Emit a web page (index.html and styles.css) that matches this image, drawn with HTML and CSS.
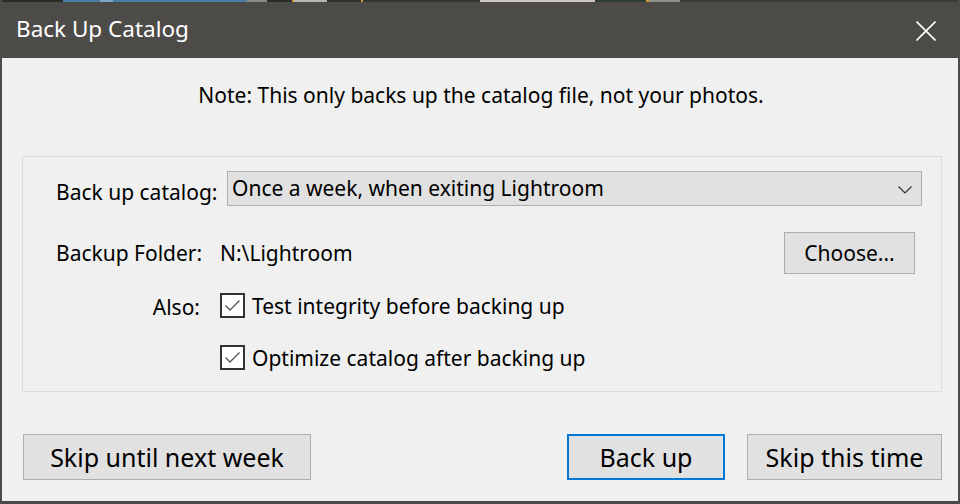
FILE: index.html
```html
<!DOCTYPE html>
<html>
<head>
<meta charset="utf-8">
<link rel="stylesheet" href="styles.css">
</head>
<body>
<div class="window">
  <div class="strip"></div>
  <div class="titlebar">
    <span class="title">Back Up Catalog</span>
    <svg class="close" width="20" height="20" viewBox="0 0 20 20"><path d="M0.5 0.5 L19.5 19.5 M19.5 0.5 L0.5 19.5" stroke="#fff" stroke-width="1.6" fill="none"/></svg>
  </div>
  <div class="content">
    <div class="note">Note: This only backs up the catalog file, not your photos.</div>
    <div class="panel">
      <div class="row row-catalog">
        <span class="label label-catalog">Back up catalog:</span>
        <div class="select">
          <span class="select-text">Once a week, when exiting Lightroom</span>
          <svg class="chev" width="14" height="8" viewBox="0 0 14 8"><path d="M0.5 0.5 L7 7 L13.5 0.5" stroke="#333" stroke-width="1.2" fill="none"/></svg>
        </div>
      </div>
      <div class="row row-folder">
        <span class="label label-folder">Backup Folder:</span>
        <span class="folder">N:\Lightroom</span>
        <button class="btn btn-choose">Choose...</button>
      </div>
      <div class="row row-check">
        <span class="label label-also">Also:</span>
        <span class="check"><svg width="21" height="21" viewBox="0 0 21 21"><path d="M3.5 10.5 L8 15 L17.5 5.5" stroke="#555" stroke-width="1.3" fill="none"/></svg></span>
        <span class="check-text">Test integrity before backing up</span>
      </div>
      <div class="row row-check row-check2">
        <span class="label label-also"></span>
        <span class="check"><svg width="21" height="21" viewBox="0 0 21 21"><path d="M3.5 10.5 L8 15 L17.5 5.5" stroke="#555" stroke-width="1.3" fill="none"/></svg></span>
        <span class="check-text">Optimize catalog after backing up</span>
      </div>
    </div>
    <div class="actions">
      <button class="btn btn-big btn-skipweek">Skip until next week</button>
      <div class="spacer"></div>
      <button class="btn btn-big btn-default btn-backup">Back up</button>
      <button class="btn btn-big btn-skiptime">Skip this time</button>
    </div>
  </div>
</div>
</body>
</html>
```

FILE: styles.css
```css
html, body {
  margin: 0;
  padding: 0;
  background: #4d4b48;
}
body {
  font-family: "Noto Sans", "Open Sans", sans-serif;
  color: #000;
}
.window {
  width: 960px;
  height: 504px;
  box-sizing: border-box;
  border-left: 2px solid #4d4b48;
  border-right: 2px solid #4d4b48;
  border-bottom: 3px solid #4d4b48;
  display: flex;
  flex-direction: column;
  overflow: hidden;
}
.strip {
  height: 2px;
  margin: 0 -2px;
  background: linear-gradient(to right,
    #2a2c28 0px, #2a2c28 63px,
    #4a7ea6 63px, #4a7ea6 100px,
    #7fa6c4 100px, #7fa6c4 113px,
    #4a7ea6 113px, #4a7ea6 247px,
    #8a8a86 247px, #8a8a86 267px,
    #2c2d2a 267px, #2c2d2a 292px,
    #d49a2a 292px, #d49a2a 294px,
    #b8b6b0 294px, #b8b6b0 327px,
    #2c302c 327px, #2c302c 361px,
    #d49a2a 361px, #d49a2a 363px,
    #303630 363px, #303630 480px,
    #cfc6c4 480px, #cfc6c4 595px,
    #2e3c36 595px, #2e3c36 646px,
    #d49a2a 646px, #d49a2a 649px,
    #8e8e8a 649px, #8e8e8a 680px,
    #3c3b38 680px, #3c3b38 960px);
}
.titlebar {
  height: 56px;
  background: #4d4b48;
  display: flex;
  align-items: center;
  padding-left: 14px;
  padding-right: 22px;
}
.title {
  flex: 1;
  color: #fff;
  font-size: 22.5px;
  line-height: 28px;
  margin-top: -2px;
}
.close {
  display: block;
  margin-top: 2px;
}
.content {
  flex: 1;
  background: #f0f0f0;
  display: flex;
  flex-direction: column;
}
.note {
  margin-top: 23px;
  height: 28px;
  line-height: 28px;
  text-align: center;
  font-size: 21px;
  padding-left: 2px;
}
.panel {
  margin: 47px 0 0 20px;
  width: 920px;
  box-sizing: border-box;
  border: 1px solid #dcdcdc;
  padding: 14px 19px 21px 33px;
  display: flex;
  flex-direction: column;
}
.row {
  display: flex;
  align-items: center;
  font-size: 21px;
  line-height: 25px;
}
.label {
  display: block;
}
.label-catalog {
  width: 171px;
  padding-top: 7px;
}
.select {
  flex: 1;
  height: 35px;
  box-sizing: border-box;
  border: 1px solid #adadad;
  background: #e1e1e1;
  display: flex;
  align-items: center;
  padding: 0 9px 0 4px;
}
.select-text {
  flex: 1;
}
.chev {
  display: block;
  margin-top: 2px;
}
.row-folder {
  margin-top: 26px;
}
.label-folder {
  width: 164px;
}
.folder {
  flex: 1;
}
.btn {
  font-family: inherit;
  color: #000;
  background: #e1e1e1;
  border: 1px solid #adadad;
  padding: 0;
  margin: 0;
  box-sizing: border-box;
}
.btn-choose {
  width: 131px;
  height: 42px;
  font-size: 21px;
  margin-right: 7px;
}
.row-check {
  margin-top: 19px;
  height: 25px;
}
.row-check2 {
  margin-top: 27px;
}
.label-also {
  width: 144px;
  text-align: right;
  margin-right: 20px;
  padding-top: 4px;
}
.check {
  width: 25px;
  height: 25px;
  flex: none;
  box-sizing: border-box;
  border: 2px solid #333;
  background: #fff;
  display: flex;
  align-items: center;
  justify-content: center;
}
.check svg {
  display: block;
}
.check-text {
  margin-left: 7px;
  margin-top: 2px;
}
.actions {
  display: flex;
  margin: 42px 16px 0 21px;
}
.spacer {
  flex: 1;
}
.btn-big {
  height: 46px;
  font-size: 25px;
}
.btn-skipweek {
  width: 288px;
}
.btn-backup {
  width: 158px;
  border: 2px solid #0078d7;
  margin-right: 22px;
}
.btn-skiptime {
  width: 195px;
}
```
